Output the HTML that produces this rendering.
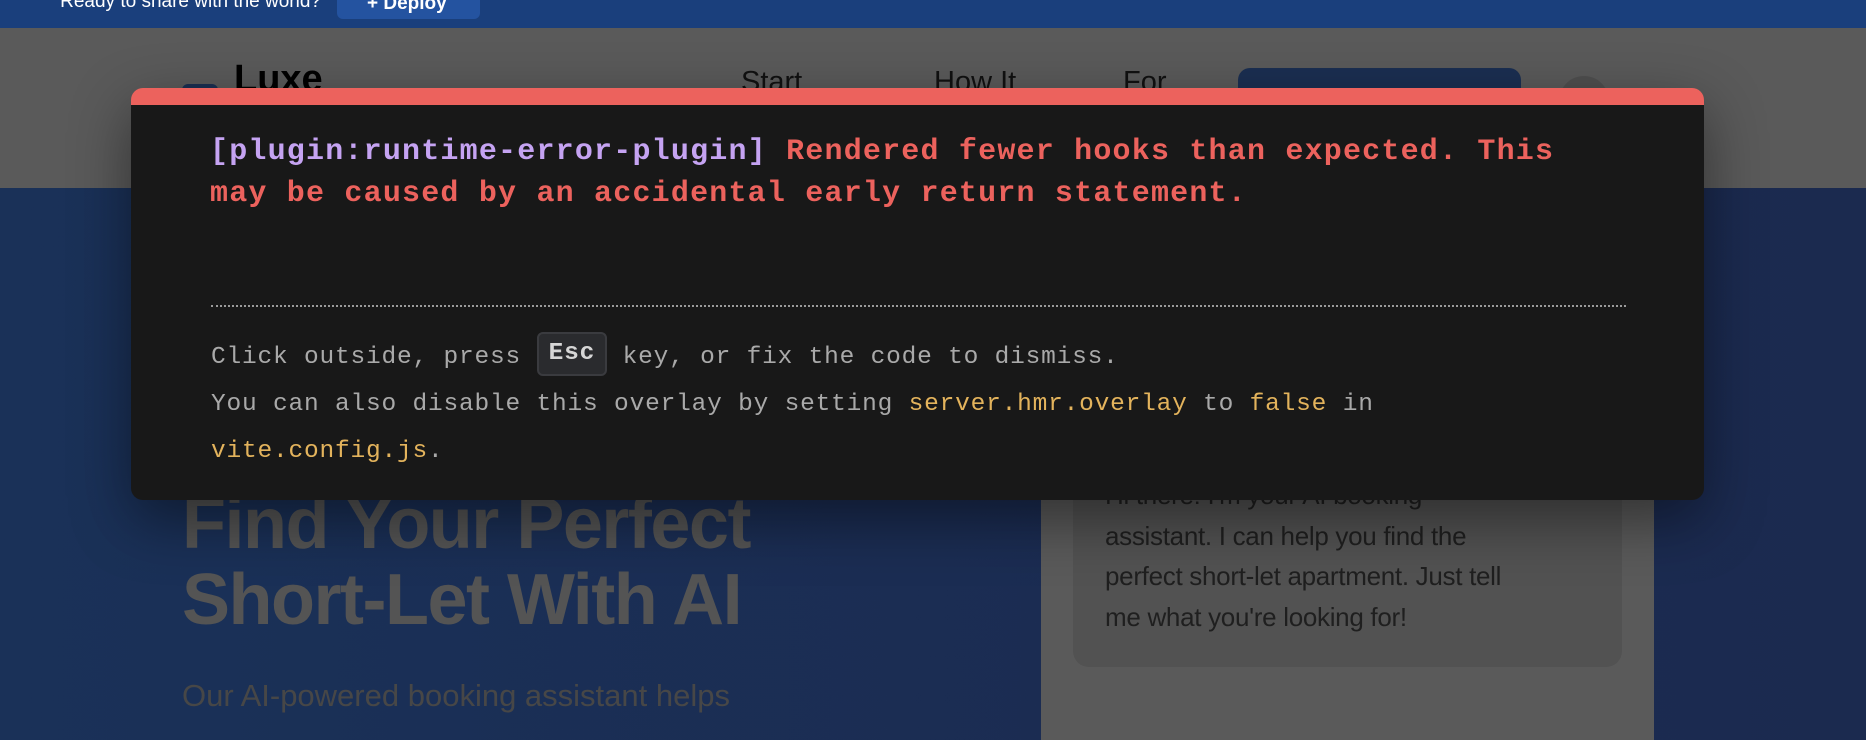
<!DOCTYPE html>
<html><head><meta charset="utf-8"><style>
*{margin:0;padding:0;box-sizing:border-box}
body{width:1866px;height:698px;overflow:hidden;position:relative;background:linear-gradient(90deg,#1a3158 0%,#1b2c52 60%,#1b2a4f 100%);font-family:"Liberation Sans",sans-serif}
.top{position:absolute;left:0;top:0;width:1866px;height:28px;background:#1a3f7c}
.top .t{position:absolute;right:1545px;top:-9px;color:#fff;font-size:19px}
.dep{position:absolute;left:337px;top:-6px;width:143px;height:25px;background:#2453a0;border-radius:6px;color:#fff;font-size:19px;padding-left:30px;line-height:20px;font-weight:bold}
.hdr{position:absolute;left:0;top:28px;width:1866px;height:160px;background:#5a5a5a}
.logo{position:absolute;left:182px;top:84px;width:36px;height:30px;background:#1b2f52;border-radius:6px}
.luxe{position:absolute;left:234px;top:58px;font-size:38px;font-weight:bold;color:#000}
.nav{position:absolute;top:66px;font-size:29px;color:#111}
.btn{position:absolute;left:1238px;top:68px;width:283px;height:60px;background:#1b2f52;border-radius:12px}
.circ{position:absolute;left:1559px;top:76px;width:50px;height:50px;background:#4f4f4f;border-radius:50%}
h1{position:absolute;left:182px;top:486px;font-size:72px;line-height:76px;color:#545454;font-weight:bold;letter-spacing:-1.5px}
.sub{position:absolute;left:182px;top:678px;font-size:31px;color:#474747}
.chat{position:absolute;left:1041px;top:440px;width:613px;height:300px;background:#5a5a5a}
.bub{position:absolute;left:32px;top:18px;width:549px;height:209px;background:#525252;border-radius:16px;padding:17px 20px 0 32px;font-size:26px;line-height:40.5px;color:#1f1f1f;letter-spacing:-0.3px}
.card{position:absolute;left:131px;top:88px;width:1573px;height:412px;background:#181818;border-radius:12px;border-top:17px solid #ec625d;box-shadow:0 20px 60px rgba(0,0,0,.45);font-family:"Liberation Mono","DejaVu Sans Mono",monospace}
.msg{position:absolute;left:79px;top:26px;font-size:30px;line-height:42px;font-weight:bold;color:#ec625d;letter-spacing:1.2px}
.msg .p{color:#c5a3f2}
.hr{position:absolute;left:80px;top:200px;width:1415px;border-top:2px dotted #9a9a9a}
.tip{position:absolute;left:80px;top:229px;font-size:24.5px;line-height:47px;color:#a9a9a9;letter-spacing:0.8px}
.y{color:#e3b35c}
.kbd{display:inline-block;background:#2a2b2e;border:2px solid #3a3b3f;border-radius:6px;color:#d6d6d6;font-weight:bold;padding:0 10px;line-height:40px;height:44px;vertical-align:middle;margin-top:-6px}
</style></head><body>
<div class="top"><span class="t">Ready to share with the world?</span><div class="dep">+ Deploy</div></div>
<div class="hdr"></div>
<div class="logo"></div><div class="luxe">Luxe</div>
<div class="nav" style="left:741px">Start</div>
<div class="nav" style="left:934px">How It</div>
<div class="nav" style="left:1123px">For</div>
<div class="btn"></div><div class="circ"></div>
<h1>Find Your Perfect<br>Short-Let With AI</h1>
<div class="sub">Our AI-powered booking assistant helps</div>
<div class="chat"><div class="bub">Hi there! I'm your AI booking<br>assistant. I can help you find the<br>perfect short-let apartment. Just tell<br>me what you're looking for!</div></div>
<div class="card">
<div class="msg"><span class="p">[plugin:runtime-error-plugin]</span> Rendered fewer hooks than expected. This<br>may be caused by an accidental early return statement.</div>
<div class="hr"></div>
<div class="tip">Click outside, press <span class="kbd">Esc</span> key, or fix the code to dismiss.<br>You can also disable this overlay by setting <span class="y">server.hmr.overlay</span> to <span class="y">false</span> in<br><span class="y">vite.config.js</span>.</div>
</div>
</body></html>
